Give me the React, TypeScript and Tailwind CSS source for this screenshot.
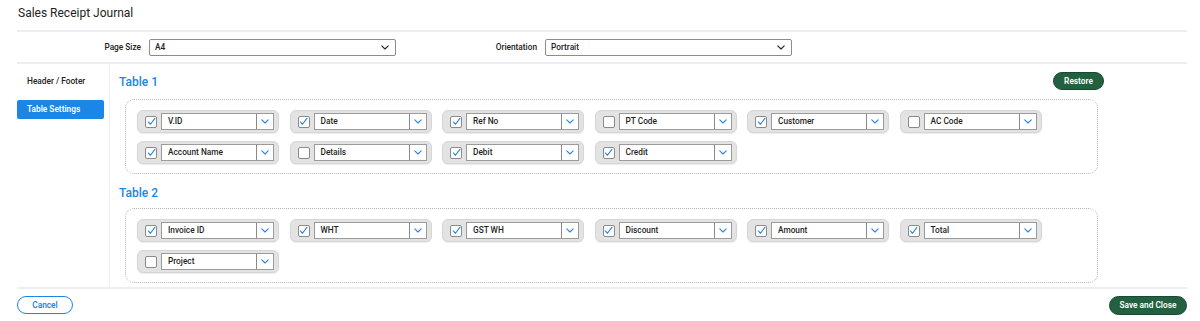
import React from 'react';

type Col = { label: string; checked: boolean };

const table1: Col[] = [
  { label: 'V.ID', checked: true },
  { label: 'Date', checked: true },
  { label: 'Ref No', checked: true },
  { label: 'PT Code', checked: false },
  { label: 'Customer', checked: true },
  { label: 'AC Code', checked: false },
  { label: 'Account Name', checked: true },
  { label: 'Details', checked: false },
  { label: 'Debit', checked: true },
  { label: 'Credit', checked: true },
];

const table2: Col[] = [
  { label: 'Invoice ID', checked: true },
  { label: 'WHT', checked: true },
  { label: 'GST WH', checked: true },
  { label: 'Discount', checked: true },
  { label: 'Amount', checked: true },
  { label: 'Total', checked: true },
  { label: 'Project', checked: false },
];

function Chevron({ color, w = 8 }: { color: string; w?: number }) {
  return (
    <svg width={w} height={w * 0.6} viewBox="0 0 10 6" fill="none">
      <path d="M1 1l4 4 4-4" stroke={color} strokeWidth="1.4" strokeLinecap="round" strokeLinejoin="round" />
    </svg>
  );
}

function ColumnItem({ col }: { col: Col }) {
  return (
    <div className="flex h-[23px] w-[142px] items-center rounded-[6px] border border-[#d6d6d6] bg-[#e3e3e3] pl-[7px] pr-[4px] shadow-[0_1px_1px_rgba(0,0,0,0.08)]">
      <span className="flex h-[12px] w-[12px] shrink-0 items-center justify-center rounded-[2px] border border-[#8a8a8a] bg-white">
        {col.checked && (
          <svg width="9" height="9" viewBox="0 0 10 10" fill="none">
            <path d="M1.5 5.5l2.3 2.6L8.8 1.5" stroke="#1d86e3" strokeWidth="1.2" strokeLinecap="round" strokeLinejoin="round" />
          </svg>
        )}
      </span>
      <div className="ml-[4px] flex h-[17px] flex-1 border border-[#9b9b9b] bg-white">
        <span className="flex-1 pl-[6px] text-[8.3px] leading-[15px] font-medium text-[#1f1f1f]">{col.label}</span>
        <span className="flex w-[17px] items-center justify-center border-l border-[#8a8a8a] bg-white">
          <Chevron color="#2b86dd" w={8} />
        </span>
      </div>
    </div>
  );
}

function ColumnBox({ cols }: { cols: Col[] }) {
  return (
    <div className="mx-[6px] flex flex-wrap gap-x-[10.5px] gap-y-[8px] rounded-[9px] border border-dotted border-[#b5b5b5] pt-[10px] pb-[9px] pl-[11px]">
      {cols.map((c) => (
        <ColumnItem key={c.label} col={c} />
      ))}
    </div>
  );
}

function TopSelect({ label, value }: { label: string; value: string }) {
  return (
    <div className="flex items-center gap-[8px]">
      <span className="w-[124px] text-right text-[8.3px] font-medium text-[#222]">{label}</span>
      <div className="flex h-[17px] w-[247px] items-center justify-between rounded-[2px] border border-[#8c8c8c] bg-white pl-[5px] pr-[6px]">
        <span className="text-[8.3px] font-medium text-[#222]">{value}</span>
        <Chevron color="#222" w={8} />
      </div>
    </div>
  );
}

export default function App() {
  return (
    <div className="h-[321px] w-[1200px] overflow-hidden bg-white pl-[17px] pr-[13px] font-['Roboto',sans-serif]">
      <div className="h-[32px] border-b-2 border-[#eceef1] pt-[5px] pl-[1px] text-[12px] leading-[16px] text-[#222]">
        Sales Receipt Journal
      </div>

      <div className="flex h-[32px] items-center gap-[17px] border-b-2 border-[#eceef1] pt-[1px]">
        <TopSelect label="Page Size" value="A4" />
        <TopSelect label="Orientation" value="Portrait" />
      </div>

      <div className="flex h-[225px] border-b-2 border-[#eceef1]">
        <div className="flex w-[93px] flex-col gap-[9px] border-r border-[#eceef1] pt-[8px]">
          <div className="flex h-[19px] items-center pl-[10px] text-[8.3px] font-medium text-[#222]">Header / Footer</div>
          <div className="flex h-[19px] w-[87px] items-center rounded-[2px] bg-[#1b86e6] pl-[10px] text-[8.3px] font-semibold text-white">
            Table Settings
          </div>
        </div>

        <div className="flex-1 pr-[83px] pl-[9px]">
          <div className="mt-[8px] flex h-[18px] items-center justify-between">
            <span className="pt-[1px] text-[12px] font-medium text-[#1b86e6]">Table 1</span>
            <button className="h-[18px] w-[51px] rounded-full border border-[#174a30] bg-[#22603f] text-[8.3px] font-semibold text-white">
              Restore
            </button>
          </div>
          <div className="mt-[9px]">
            <ColumnBox cols={table1} />
          </div>

          <div className="mt-[10px] flex h-[18px] items-center">
            <span className="text-[12px] font-medium text-[#1b86e6]">Table 2</span>
          </div>
          <div className="mt-[6px]">
            <ColumnBox cols={table2} />
          </div>
        </div>
      </div>

      <div className="flex items-start justify-between pt-[7px]">
        <button className="h-[18px] w-[56px] rounded-full border-[1.5px] border-[#1b86e6] bg-white text-[8.3px] font-semibold text-[#1b86e6]">
          Cancel
        </button>
        <button className="h-[19px] w-[78px] rounded-full border border-[#174a30] bg-[#22603f] text-[8.3px] font-semibold text-white">
          Save and Close
        </button>
      </div>
    </div>
  );
}
